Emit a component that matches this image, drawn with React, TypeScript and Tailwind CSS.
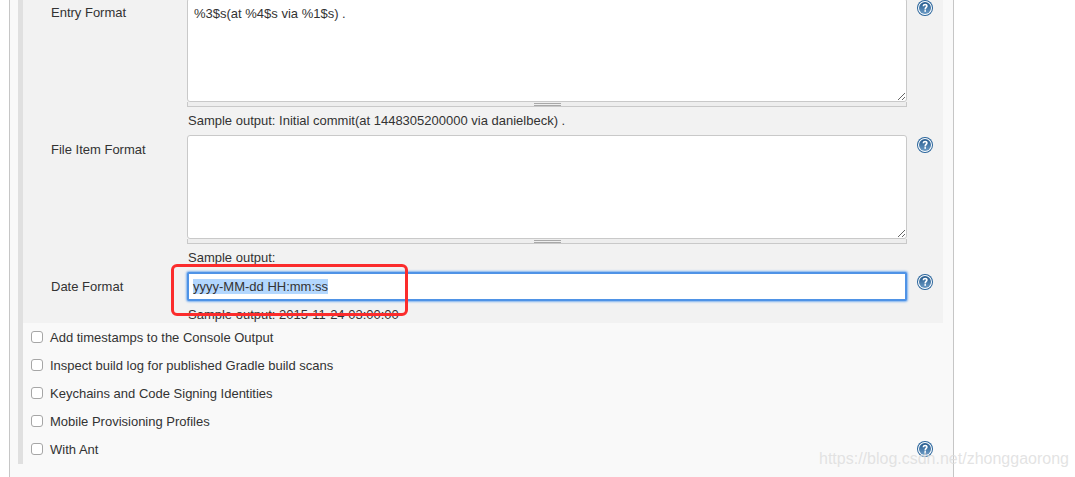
function HelpIcon() {
  return (
    <svg width="16" height="16" viewBox="0 0 16 16" className="shrink-0">
      <defs>
        <linearGradient id="helpFill" x1="0" y1="0" x2="0" y2="1">
          <stop offset="0" stopColor="#23598c" />
          <stop offset="1" stopColor="#6d9cc6" />
        </linearGradient>
      </defs>
      <circle cx="8" cy="8" r="8" fill="#2a659c" />
      <circle cx="8" cy="8" r="7" fill="#ffffff" />
      <circle cx="8" cy="8" r="6" fill="url(#helpFill)" />
      <path
        d="M5.6 6.2C5.7 4.6 6.8 3.8 8.2 3.8c1.5 0 2.5.9 2.5 2.2 0 1.9-1.7 1.8-1.7 3.4H7.4c0-2.2 1.5-2.2 1.5-3.3 0-.5-.3-.9-.8-.9-.6 0-.9.4-1 1z"
        fill="#ffffff"
      />
      <rect x="7.4" y="10.1" width="1.6" height="1.7" fill="#ffffff" />
    </svg>
  )
}

function ResizeBar() {
  return (
    <div className="flex h-[5px] justify-center border-x border-b border-[#c9c9c9] bg-[#eeeeee]">
      <div className="mt-px h-[3px] w-[27px] border-y border-[#a8a8a8]" />
    </div>
  )
}

function FormatArea({ value }: { value: string }) {
  return (
    <textarea
      readOnly
      value={value}
      className="block h-[104px] w-full resize-y rounded-[3px] border border-[#c9c9c9] bg-white px-[6px] py-[7px] text-[13px] leading-[15px] text-[#333] outline-none"
    />
  )
}

function SampleOutput({ children }: { children?: React.ReactNode }) {
  return <p className="mt-[6px] h-[15px] pl-px text-[13px] leading-[15px] text-[#333]">{children}</p>
}

function FormRow({ label, children, className }: { label: string; children: React.ReactNode; className?: string }) {
  return (
    <div className={`flex ${className ?? ''}`}>
      <label className="w-[136px] shrink-0 pt-[7px] text-[13px] leading-[15px] text-[#333]">{label}</label>
      <div className="w-[720px] shrink-0">{children}</div>
      <div className="ml-[10px] mt-[2px]">
        <HelpIcon />
      </div>
    </div>
  )
}

function OptionRow({ label, help }: { label: string; help?: boolean }) {
  return (
    <div className="flex h-[28px] items-center pl-[8px] pr-[10px]">
      <span className="h-[12px] w-[12px] shrink-0 rounded-[3px] border border-[#a6a6a6] bg-white" />
      <span className="ml-[7px] flex-1 text-[13px] leading-[15px] text-[#333]">{label}</span>
      {help && <HelpIcon />}
    </div>
  )
}

export default function App() {
  return (
    <div
      className="relative h-[477px] w-[1075px] overflow-hidden bg-white"
      style={{ fontFamily: '"Liberation Sans", Arial, sans-serif' }}
    >
      <div className="-mt-[2px] ml-[9px] h-[479px] w-[945px] border-x border-[#c6c6c6] bg-[#f9f9f9] pl-[8px]">
        <div className="w-[925px] border-l-[5px] border-[#e0e0e0] pb-px">
          <div className="h-[325px] bg-[#f2f2f2] pl-[28px]">
            <FormRow label="Entry Format">
              <FormatArea value="%3$s(at %4$s via %1$s) ." />
              <ResizeBar />
              <SampleOutput>Sample output: Initial commit(at 1448305200000 via danielbeck) .</SampleOutput>
            </FormRow>
            <FormRow label="File Item Format" className="mt-[7px]">
              <FormatArea value="" />
              <ResizeBar />
              <SampleOutput>Sample output:</SampleOutput>
            </FormRow>
            <FormRow label="Date Format" className="mt-[7px]">
              <div className="flex h-[29px] items-center rounded-[2px] border-2 border-[#4f93e6] bg-white pl-[4px] text-[13px] leading-[15px] text-[#333] shadow-[0_0_2px_1px_#7fb2ef]">
                <span className="bg-[#b3d7fe]">yyyy-MM-dd HH:mm:ss</span>
              </div>
              <SampleOutput>Sample output: 2015-11-24 03:00:00</SampleOutput>
            </FormRow>
          </div>
          <OptionRow label="Add timestamps to the Console Output" />
          <OptionRow label="Inspect build log for published Gradle build scans" />
          <OptionRow label="Keychains and Code Signing Identities" />
          <OptionRow label="Mobile Provisioning Profiles" />
          <OptionRow label="With Ant" help />
        </div>
      </div>

      {/* annotation drawn over the date field */}
      <div className="absolute left-[171px] top-[264px] h-[52px] w-[237px] rounded-[6px] border-[3px] border-[#fb2c2c]" />

      {/* image watermark */}
      <span className="absolute left-[819px] top-[450px] whitespace-nowrap text-[16px] leading-[18px] text-[#dcdcdc]/80">
        https://blog.csdn.net/zhonggaorong
      </span>
    </div>
  )
}
